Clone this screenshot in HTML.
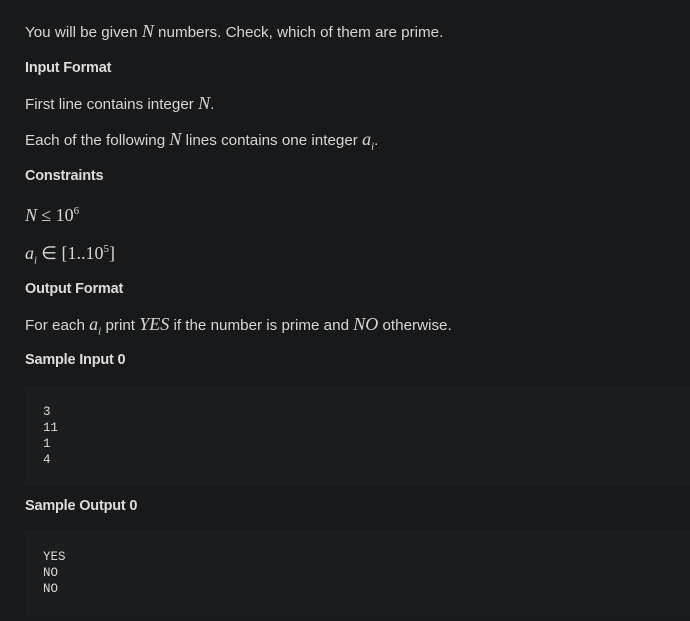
<!DOCTYPE html>
<html><head><meta charset="utf-8"><style>
html,body{margin:0;padding:0;background:#18191b;width:690px;height:621px;overflow:hidden}
body{font-family:"Liberation Sans",sans-serif;color:#d6d6d6;font-size:15.2px;position:relative}
.t{position:absolute;left:25px;white-space:nowrap;line-height:18px}
.h{font-weight:bold;font-size:14.5px;letter-spacing:-0.2px;color:#dcdcdc}
.m{font-family:"Liberation Serif",serif;font-style:italic;font-size:18px}
.r{font-family:"Liberation Serif",serif;font-size:18px}
.code{position:absolute;left:25px;width:665px;background:#1c1d1e}
.code pre{margin:0;position:absolute;left:18px;font-family:"Liberation Mono",monospace;font-size:12.5px;line-height:16px;color:#dcdcdc}
sup{font-size:11px}
sub{font-size:11px}
</style></head><body>
<div class="t" style="top:22px">You will be given <span class="m">N</span> numbers. Check, which of them are prime.</div>
<div class="t h" style="top:59px">Input Format</div>
<div class="t" style="top:94px">First line contains integer <span class="m">N</span>.</div>
<div class="t" style="top:130px">Each of the following <span class="m">N</span> lines contains one integer <span class="m">a<sub>i</sub></span>.</div>
<div class="t h" style="top:167px">Constraints</div>
<div class="t" style="top:202px"><span class="m">N</span> <span class="r">≤ 10<sup>6</sup></span></div>
<div class="t" style="top:240px"><span class="m">a<sub>i</sub></span> <span class="r">∈ [1..10<sup>5</sup>]</span></div>
<div class="t h" style="top:280px">Output Format</div>
<div class="t" style="top:315px">For each <span class="m">a<sub>i</sub></span> print <span class="m">YES</span> if the number is prime and <span class="m">NO</span> otherwise.</div>
<div class="t h" style="top:351px">Sample Input 0</div>
<div class="code" style="top:386px;height:100px"><pre style="top:18px">3
11
1
4</pre></div>
<div class="t h" style="top:497px">Sample Output 0</div>
<div class="code" style="top:530px;height:86px"><pre style="top:19px">YES
NO
NO</pre></div>
</body></html>
